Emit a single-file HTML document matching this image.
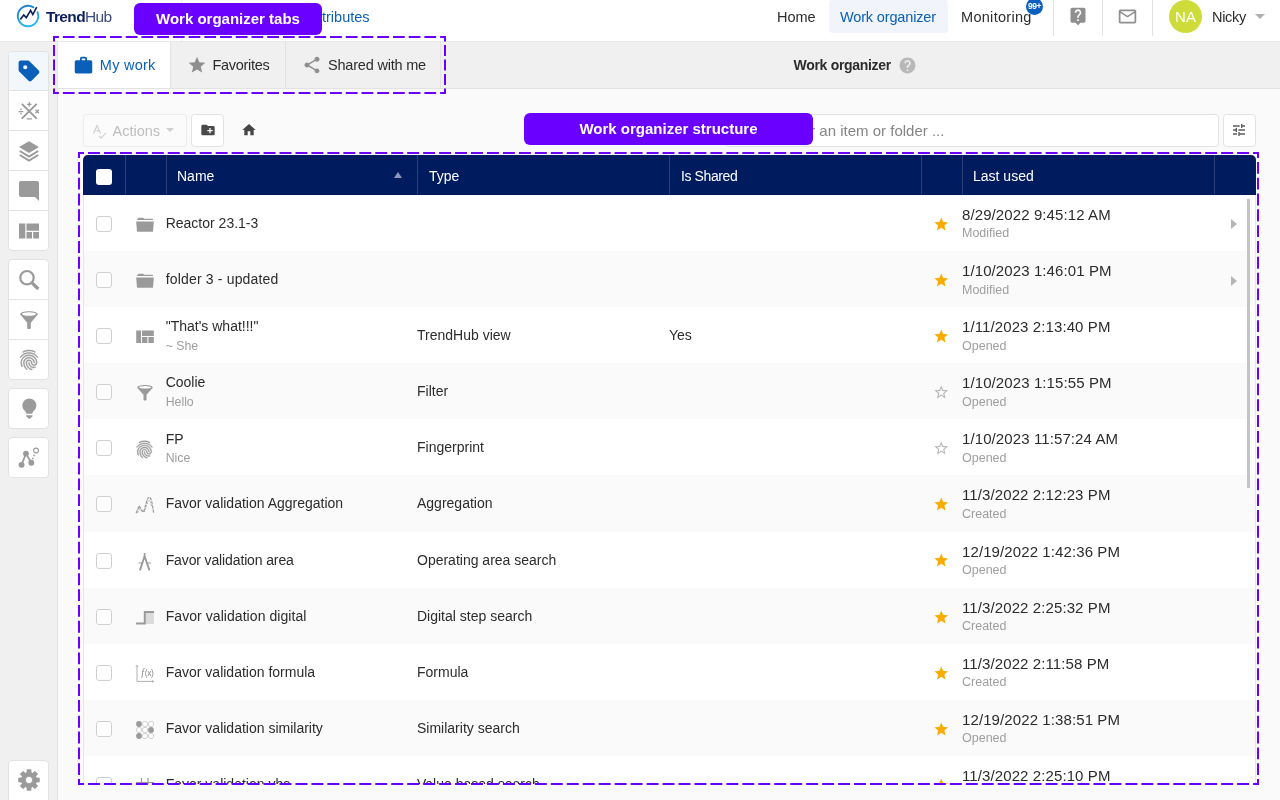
<!DOCTYPE html>
<html lang="en">
<head>
<meta charset="utf-8">
<title>TrendHub - Work organizer</title>
<style>
*{box-sizing:border-box;margin:0;padding:0}
html,body{width:1280px;height:800px;overflow:hidden}
body{font-family:"Liberation Sans",sans-serif;background:#f0f0f0;color:#2c2c2c;position:relative;font-size:14px}
#app{position:absolute;left:0;top:0;width:1280px;height:800px;overflow:hidden;will-change:transform}
svg{display:block}
.abs{position:absolute}
/* ---------- top bar ---------- */
#top{position:absolute;left:0;top:0;width:1280px;height:42px;background:#fff;border-bottom:1px solid #e8e8e8}
#top .t{position:absolute;white-space:nowrap;line-height:20px}
.logo-txt{left:46px;top:6.700px;font-size:15.500px;color:#0c1e5b;letter-spacing:-0.65px}
.logo-txt b{font-weight:bold}
.logo-txt span{color:#3b4a80}
.vsep{position:absolute;top:0;width:1px;height:36px;background:#e2e2e2}
/* ---------- side bar ---------- */
.grp{position:absolute;left:8px;width:41px;background:#fff;border:1px solid #e2e2e2;border-radius:4px;overflow:hidden}
/* ---------- main ---------- */
#main{position:absolute;left:57px;top:42px;width:1223px;height:758px;background:#fafafa;border-left:1px solid #e2e2e2}
#tabs{position:absolute;left:0;top:0;width:1222px;height:47px;background:#f0f0f0;border-bottom:1px solid #e2e2e2}
.tab{position:absolute;top:0;height:46px;display:flex;align-items:center;font-size:14.5px;color:#2c2c2c;border-right:1px solid #e2e2e2;white-space:nowrap}
.tab.on{background:#fff;color:#0a5fb8}
.tab svg{margin-right:7px}
/* ---------- toolbar ---------- */
.btn{position:absolute;top:114px;height:33px;border:1px solid #e2e2e2;border-radius:3.500px;background:#fff}
/* ---------- table ---------- */
#thead{position:absolute;left:83px;top:155px;width:1172.500px;height:40px;background:#001b5e;border-radius:5px 5px 0 0;color:#fff;font-size:14px}
#thead .c{position:absolute;top:0;height:39px;border-left:1px solid #2b3f77}
#thead .h{position:absolute;top:12px;line-height:18px;white-space:nowrap}
#tbody{position:absolute;left:83px;top:194.900px;width:1172.500px;height:589px;overflow:hidden;border-left:1px solid #e6e6e6;border-right:1px solid #e6e6e6;background:#fff}
.row{position:relative;height:56.120px;width:1171px;background:#fff}
.row:nth-child(even){background:#fafafa}
.row .cb{position:absolute;left:12px;top:21px;width:16px;height:16px;border:1px solid #cfcfcf;border-radius:3px;background:#fff}
.row .ic{position:absolute;left:51px;top:20px;width:20px;height:20px;overflow:visible}
.row .n{position:absolute;left:81.700px;top:19px;font-size:14px;line-height:18px;white-space:nowrap;color:#2c2c2c}
.row .n.two{top:10.200px}
.row .s{position:absolute;left:81.700px;top:30.500px;font-size:12.300px;line-height:16px;color:#9e9e9e;white-space:nowrap}
.row .ty{position:absolute;left:333px;top:19px;font-size:14px;line-height:18px;white-space:nowrap}
.row .sh{position:absolute;left:585px;top:19px;font-size:14px;line-height:18px}
.row .st{position:absolute;left:849.100px;top:20.900px;width:16.500px;height:16.500px}
.row .d{position:absolute;left:878px;top:11px;font-size:15px;line-height:18px;white-space:nowrap;letter-spacing:.1px}
.row .m{position:absolute;left:878px;top:30.500px;font-size:12.500px;line-height:16px;color:#9e9e9e}
.row .ar{position:absolute;left:1147px;top:24.500px;width:0;height:0;border-left:6px solid #b5b5b5;border-top:5px solid transparent;border-bottom:5px solid transparent}
/* ---------- annotations ---------- */
.lab{position:absolute;background:#6a00ff;color:#fff;border-radius:6px;font-weight:bold;font-size:15px;text-align:center;white-space:nowrap}
</style>
</head>
<body>
<div id="app">

<!-- TOPBAR -->
<div id="top">
  <svg class="abs" style="left:15px;top:3.400px" width="26" height="26" viewBox="0 0 26 26">
    <defs><linearGradient id="lg" x1="0" y1="0" x2="0.350" y2="1"><stop offset="0" stop-color="#1878cc"/><stop offset="1" stop-color="#25b8ea"/></linearGradient></defs>
    <path d="M18.400 4.350 A10.200 10.200 0 1 0 22.460 9.180" fill="none" stroke="url(#lg)" stroke-width="1.900" stroke-linecap="round"/>
    <path d="M5.300 16.400 L8.700 12 L11.300 14.600 L15.600 7.400 L17.800 11.600 L21.700 4.200" fill="none" stroke="#0c1e5b" stroke-width="1.600" stroke-linejoin="miter"/>
  </svg>
  <div class="t logo-txt"><b>Trend</b><span>Hub</span></div>
  <div class="t" style="left:308.300px;top:7px;font-size:14.500px;color:#0a5fb8">Attributes</div>
  <div class="t" style="left:777px;top:7px;font-size:14.5px">Home</div>
  <div class="abs" style="left:829px;top:0;width:118.500px;height:32.500px;background:#f1f5fb;border-radius:3px 3px 4px 4px"></div>
  <div class="t" style="left:840px;top:7px;font-size:14.500px;letter-spacing:-.15px;color:#0a5fb8">Work organizer</div>
  <div class="t" style="left:961px;top:7px;font-size:14.500px;letter-spacing:.3px">Monitoring</div>
  <div class="abs" style="left:1026px;top:-2px;width:17px;height:17px;border-radius:9px;background:#0a5fc0;color:#fff;font-size:8.500px;font-weight:bold;line-height:17px;text-align:center;letter-spacing:-0.5px">99+</div>
  <div class="vsep" style="left:181px;height:41px;background:#ececec"></div>
  <div class="vsep" style="left:1053px"></div>
  <div class="vsep" style="left:1102px"></div>
  <div class="vsep" style="left:1152px"></div>
  <svg class="abs" style="left:1068px;top:6px" width="20" height="20" viewBox="0 0 24 24"><path fill="#8f8f8f" d="M19 2H5c-1.11 0-2 .9-2 2v14c0 1.1.89 2 2 2h4l3 3 3-3h4c1.1 0 2-.9 2-2V4c0-1.1-.9-2-2-2zm-6 16h-2v-2h2v2zm2.070-7.750l-.9.92C13.450 11.9 13 12.500 13 14h-2v-.5c0-1.100.45-2.100 1.170-2.830l1.240-1.260c.37-.36.59-.86.59-1.410 0-1.100-.9-2-2-2s-2 .9-2 2H8c0-2.210 1.790-4 4-4s4 1.790 4 4c0 .88-.36 1.680-.93 2.250z"/></svg>
  <svg class="abs" style="left:1117.200px;top:5.800px" width="21" height="21" viewBox="0 0 24 24"><path fill="#8f8f8f" d="M20 4H4c-1.100 0-1.990.9-1.990 2L2 18c0 1.100.9 2 2 2h16c1.100 0 2-.9 2-2V6c0-1.100-.9-2-2-2zm0 14H4V8l8 5 8-5v10zm-8-7L4 6h16l-8 5z"/></svg>
  <div class="abs" style="left:1169px;top:0;width:33px;height:33px;border-radius:17px;background:#cddc39;color:#fff;font-size:15px;line-height:33px;text-align:center">NA</div>
  <div class="t" style="left:1212px;top:7px;font-size:14.500px;letter-spacing:-.3px">Nicky</div>
  <div class="abs" style="left:1254.500px;top:14px;width:0;height:0;border-top:5px solid #b0b0b0;border-left:5px solid transparent;border-right:5px solid transparent"></div>
</div>

<!-- SIDEBAR -->
<div class="grp" style="top:51px;height:200px"><div class="abs" style="left:0;top:0;width:39px;height:38px;background:#f2f7fc"></div><div class="abs" style="left:0;top:38px;width:39px;height:1px;background:#e2e2e2"></div><div class="abs" style="left:0;top:78px;width:39px;height:1px;background:#e2e2e2"></div><div class="abs" style="left:0;top:118px;width:39px;height:1px;background:#e2e2e2"></div><div class="abs" style="left:0;top:158px;width:39px;height:1px;background:#e2e2e2"></div></div>
<div class="grp" style="top:259px;height:121px"><div class="abs" style="left:0;top:39px;width:39px;height:1px;background:#e2e2e2"></div><div class="abs" style="left:0;top:79px;width:39px;height:1px;background:#e2e2e2"></div></div>
<div class="grp" style="top:388px;height:41px"></div>
<div class="grp" style="top:437px;height:41px"></div>
<div class="grp" style="top:760px;height:46px"></div>
<svg class="abs" style="left:16.75px;top:59.25px" width="24" height="24" viewBox="0 0 24 24"><path fill="#0a5fb8" d="M21.41 11.58l-9-9C12.05 2.22 11.55 2 11 2H4c-1.1 0-2 .9-2 2v7c0 .55.22 1.05.59 1.42l9 9c.36.36.86.58 1.41.58.55 0 1.05-.22 1.41-.59l7-7c.37-.36.59-.86.59-1.41 0-.55-.23-1.06-.59-1.42zM8.400 10.400a2 2 0 1 1 0-4 2 2 0 0 1 0 4z" transform="translate(12 12) scale(1.040) translate(-12 -12)"/></svg>
<svg class="abs" style="left:16.5px;top:99px" width="24" height="24" viewBox="0 0 24 24" fill="none" stroke="#9a9a9a"><path d="M4.800 4.800L19.700 19.700M19.700 4.800L4.800 19.700" stroke-width="1.900"/><path d="M10.100 5.300h4.400M12.300 3.100v4.400M9.700 19.900h5.200M1.700 12.500h4.600M18.500 10.800l3.400 3.400M21.900 10.800l-3.400 3.400" stroke-width="1.250"/><circle cx="4" cy="10.400" r=".8" fill="#9a9a9a" stroke="none"/><circle cx="4" cy="14.600" r=".8" fill="#9a9a9a" stroke="none"/></svg>
<svg class="abs" style="left:16.75px;top:138.5px" width="24" height="24" viewBox="0 0 24 24"><path fill="#9a9a9a" d="M12 2.200L2.050 8.100l9.950 5.900 9.950-5.900z"/><path fill="none" stroke="#9a9a9a" stroke-width="2" d="M2.800 12l9.200 5.500 9.200-5.500M2.800 16l9.200 5.500 9.200-5.500"/></svg>
<svg class="abs" style="left:16.75px;top:178.5px" width="24" height="24" viewBox="0 0 24 24"><path fill="#9a9a9a" d="M21.990 4c0-1.100-.89-2-1.990-2H4c-1.100 0-2 .9-2 2v12c0 1.100.9 2 2 2h14l4 4-.01-18z"/></svg>
<svg class="abs" style="left:16.75px;top:219px" width="24" height="24" viewBox="0 0 24 24"><path fill="#9a9a9a" d="M2 4.500h6.300v15H2zM9.500 4.500H22v7.300H9.500zM9.500 13h5.500v6.500H9.500zM16.200 13H22v6.500h-5.800z"/></svg>
<svg class="abs" style="left:16.75px;top:267.5px" width="24" height="24" viewBox="0 0 24 24" fill="none" stroke="#9a9a9a"><circle cx="10" cy="9.700" r="6.700" stroke-width="2.200"/><path d="M15 14.800l6.300 6.200" stroke-width="3.200"/></svg>
<svg class="abs" style="left:16.75px;top:307.5px" width="24" height="24" viewBox="0 0 24 24"><path fill="#9a9a9a" d="M3.300 6.200C3.300 4.400 7.100 3.300 12 3.300s8.700 1.100 8.700 2.900c0 .5-.3 1-.8 1.400L13.800 14.800v5.300c0 .6-.4 1-1 1h-1.600c-.6 0-1-.4-1-1v-5.300L4.100 7.600c-.5-.4-.8-.9-.8-1.400z"/><ellipse cx="12" cy="6" rx="7" ry="1.700" fill="#fff"/></svg>
<svg class="abs" style="left:16.75px;top:347.5px" width="24" height="24" viewBox="0 0 24 24"><path fill="#9a9a9a" stroke="#9a9a9a" stroke-width=".45" d="M17.810 4.470c-.08 0-.16-.02-.23-.06C15.660 3.420 14 3 12.010 3c-1.980 0-3.860.47-5.570 1.410-.24.13-.54.04-.68-.2-.13-.24-.04-.55.2-.68C7.820 2.520 9.860 2 12.010 2c2.130 0 3.990.47 6.030 1.520.25.13.34.43.21.67-.09.18-.26.28-.44.28zM3.500 9.720c-.1 0-.2-.03-.29-.09-.23-.16-.28-.47-.12-.7.990-1.400 2.250-2.500 3.750-3.270C9.980 4.040 14 4.030 17.150 5.650c1.500.77 2.760 1.860 3.750 3.250.16.22.11.54-.12.7-.23.16-.54.11-.7-.12-.9-1.260-2.040-2.250-3.390-2.940-2.870-1.470-6.540-1.470-9.400.01-1.360.7-2.500 1.700-3.400 2.960-.08.14-.23.21-.39.21zm6.250 12.070c-.13 0-.26-.05-.35-.15-.87-.87-1.340-1.430-2.010-2.640-.69-1.230-1.050-2.730-1.050-4.340 0-2.970 2.540-5.390 5.660-5.390s5.660 2.420 5.660 5.390c0 .28-.22.5-.5.5s-.5-.22-.5-.5c0-2.420-2.090-4.390-4.660-4.390-2.570 0-4.660 1.970-4.660 4.390 0 1.440.32 2.770.93 3.850.64 1.150 1.080 1.640 1.850 2.420.19.2.19.51 0 .71-.11.1-.24.15-.37.15zm7.170-1.850c-1.190 0-2.240-.3-3.100-.89-1.490-1.010-2.380-2.650-2.380-4.390 0-.28.22-.5.5-.5s.5.22.5.5c0 1.410.72 2.740 1.940 3.560.71.480 1.540.71 2.540.71.240 0 .64-.03 1.040-.1.270-.05.53.13.58.41.05.27-.13.53-.41.58-.57.11-1.070.12-1.210.12zM14.910 22c-.04 0-.09-.01-.13-.02-1.590-.44-2.630-1.030-3.720-2.100-1.400-1.390-2.170-3.240-2.170-5.220 0-1.620 1.380-2.940 3.080-2.940 1.700 0 3.080 1.320 3.080 2.940 0 1.070.93 1.940 2.080 1.940s2.080-.87 2.080-1.940c0-3.770-3.250-6.830-7.250-6.830-2.840 0-5.440 1.580-6.610 4.030-.39.81-.59 1.760-.59 2.800 0 .78.07 2.010.67 3.610.1.260-.03.55-.29.640-.26.1-.55-.04-.64-.29-.49-1.310-.73-2.610-.73-3.960 0-1.200.23-2.290.68-3.240 1.330-2.790 4.280-4.600 7.510-4.600 4.550 0 8.250 3.510 8.250 7.830 0 1.620-1.380 2.940-3.080 2.940s-3.080-1.320-3.080-2.940c0-1.070-.93-1.940-2.080-1.940s-2.080.87-2.080 1.940c0 1.710.66 3.310 1.870 4.510.95.940 1.860 1.460 3.270 1.850.27.07.42.35.35.61-.05.23-.26.38-.47.38z"/></svg>
<svg class="abs" style="left:16.75px;top:396.5px" width="24" height="24" viewBox="0 0 24 24"><path fill="#9a9a9a" d="M12.350 1.500a7 7 0 0 0-7 7c0 2.400 1.200 4.400 2.900 5.700c.6.500 1 1.300 1 2.100v.5h6.200v-.5c0-.8.400-1.600 1-2.100c1.700-1.300 2.900-3.300 2.900-5.700a7 7 0 0 0-7-7zM9.250 18.200h6.200v1.300l-3.100 2.600-3.100-2.600z"/></svg>
<svg class="abs" style="left:16.75px;top:445.5px" width="24" height="24" viewBox="0 0 24 24" fill="#9a9a9a" stroke="#9a9a9a"><path d="M4.550 18.850L8.950 7.600L14.350 16.800" fill="none" stroke-width="1.700"/><path d="M15.600 13.200L17.600 8" fill="none" stroke-width="1.500" stroke-dasharray="1.600 1.600"/><circle cx="4.550" cy="18.850" r="2.950" stroke="none"/><circle cx="8.950" cy="7.600" r="2.900" stroke="none"/><circle cx="14.350" cy="16.800" r="2.950" stroke="none"/><circle cx="19.050" cy="4.500" r="2.400" fill="#fff" stroke-width="1.100"/></svg>
<svg class="abs" style="left:16.6px;top:768px" width="24" height="24" viewBox="0 0 24 24"><path fill="#9a9a9a" fill-rule="evenodd" stroke="#9a9a9a" stroke-width=".8" stroke-linejoin="round" d="M9.94 4.58L10.09 1.68L13.91 1.68L14.06 4.58L15.79 5.30L17.95 3.35L20.65 6.05L18.70 8.21L19.42 9.94L22.32 10.09L22.32 13.91L19.42 14.06L18.70 15.79L20.65 17.95L17.95 20.65L15.79 18.70L14.06 19.42L13.91 22.32L10.09 22.32L9.94 19.42L8.21 18.70L6.05 20.65L3.35 17.95L5.30 15.79L4.58 14.06L1.68 13.91L1.68 10.09L4.58 9.94L5.30 8.21L3.35 6.05L6.05 3.35L8.21 5.30zM15.60 12a3.6 3.6 0 1 0 -7.2 0a3.6 3.6 0 1 0 7.2 0z"/></svg>

<!-- MAIN -->
<div id="main">
  <div id="tabs">
    <div class="tab on" style="left:0;width:113px;padding-left:15.300px"><svg width="21" height="21" viewBox="0 0 24 24"><path fill="#0a5fb8" d="M20 6h-4V4c0-1.110-.89-2-2-2h-4c-1.110 0-2 .89-2 2v2H4c-1.110 0-1.990.89-1.990 2L2 19c0 1.110.89 2 2 2h16c1.110 0 2-.89 2-2V8c0-1.110-.89-2-2-2zm-6 0h-4V4h4v2z"/></svg><span style="margin-left:-1.500px;letter-spacing:.25px">My work</span></div>
    <div class="tab" style="left:113px;width:115px;padding-left:16px"><svg width="20" height="20" viewBox="0 0 24 24"><path fill="#8f8f8f" d="M12 17.270L18.180 21l-1.640-7.030L22 9.240l-7.190-.61L12 2 9.190 8.630 2 9.240l5.460 4.730L5.820 21z"/></svg><span style="letter-spacing:-.3px;margin-left:-1.500px">Favorites</span></div>
    <div class="tab" style="left:228px;width:155px;padding-left:16px"><svg width="20" height="20" viewBox="0 0 24 24"><path fill="#8f8f8f" d="M18 16.080c-.76 0-1.440.3-1.960.77L8.910 12.700c.05-.23.09-.46.09-.7s-.04-.47-.09-.7l7.050-4.110c.54.5 1.250.81 2.040.81 1.660 0 3-1.340 3-3s-1.340-3-3-3-3 1.340-3 3c0 .24.04.47.09.7L8.040 9.810C7.500 9.310 6.790 9 6 9c-1.660 0-3 1.340-3 3s1.340 3 3 3c.79 0 1.500-.31 2.040-.81l7.120 4.160c-.05.21-.08.43-.08.65 0 1.610 1.310 2.920 2.920 2.920 1.610 0 2.920-1.310 2.920-2.920s-1.310-2.920-2.920-2.920z"/></svg><span style="letter-spacing:-.2px;margin-left:-1px">Shared with me</span></div>
    <div class="abs" style="left:735.500px;top:13.200px;font-size:14px;letter-spacing:-.3px;font-weight:bold;line-height:20px;white-space:nowrap;color:#2c2c2c">Work organizer</div>
    <svg class="abs" style="left:840px;top:13.700px" width="19" height="19" viewBox="0 0 24 24"><path fill="#b8b8b8" d="M12 2C6.480 2 2 6.480 2 12s4.480 10 10 10 10-4.480 10-10S17.520 2 12 2zm1 17h-2v-2h2v2zm2.070-7.750l-.9.920C13.450 12.900 13 13.500 13 15h-2v-.5c0-1.100.45-2.100 1.170-2.830l1.240-1.260c.37-.36.59-.86.59-1.410 0-1.100-.9-2-2-2s-2 .9-2 2H8c0-2.210 1.790-4 4-4s4 1.790 4 4c0 .88-.36 1.680-.93 2.250z"/></svg>
  </div>
</div>

<!-- TOOLBAR -->
<div class="btn" style="left:83px;width:104px;background:#fbfbfb;border-color:#ececec"></div>
<svg class="abs" style="left:91.500px;top:122.800px" width="17" height="17" viewBox="0 0 17 17" fill="none" stroke="#cfcfcf" stroke-width="1.100"><path d="M1.500 10.500L5 2.500L8.500 10.500M2.800 7.800h4.400"/><path d="M7 13l2.200 2.200L13.800 10"/></svg>
<div class="abs" style="left:112.500px;top:120.500px;font-size:14.500px;line-height:20px;color:#bdbdbd">Actions</div>
<div class="abs" style="left:166px;top:128px;width:0;height:0;border-top:4.500px solid #cfcfcf;border-left:4px solid transparent;border-right:4px solid transparent"></div>
<div class="btn" style="left:191px;width:33px"></div>
<svg class="abs" style="left:199.700px;top:122.100px" width="16" height="16" viewBox="0 0 24 24"><path fill="#4a4a4a" d="M20 6h-8l-2-2H4c-1.110 0-1.990.89-1.990 2L2 18c0 1.110.89 2 2 2h16c1.110 0 2-.89 2-2V8c0-1.110-.89-2-2-2zm-1 8h-3v3h-2v-3h-3v-2h3V9h2v3h3v2z"/></svg>
<svg class="abs" style="left:240.700px;top:122.300px" width="16" height="16" viewBox="0 0 24 24"><path fill="#454545" d="M10 20v-6h4v6h5v-8h3L12 3 2 12h3v8z"/></svg>
<div class="btn" style="left:725px;width:493.500px"></div>
<div class="abs" style="left:746px;top:121px;font-size:15px;line-height:20px;color:#858585;white-space:nowrap">Search for an item or folder ...</div>
<div class="btn" style="left:1223px;width:33px"></div>
<svg class="abs" style="left:1231.200px;top:122.300px" width="16" height="16" viewBox="0 0 24 24"><path fill="#5c5c5c" d="M3 17v2h6v-2H3zM3 5v2h10V5H3zm10 16v-2h8v-2h-8v-2h-2v6h2zM7 9v2H3v2h4v2h2V9H7zm14 4v-2H11v2h10zm-6-4h2V7h4V5h-4V3h-2v6z"/></svg>

<!-- TABLE -->
<div id="thead">
  <div class="abs" style="left:13.300px;top:14.300px;width:16px;height:16px;background:#fff;border-radius:3px"></div>
  <div class="c" style="left:42px"></div>
  <div class="c" style="left:83px"></div>
  <div class="c" style="left:334px"></div>
  <div class="c" style="left:586px"></div>
  <div class="c" style="left:838px"></div>
  <div class="c" style="left:879px"></div>
  <div class="c" style="left:1131px"></div>
  <div class="h" style="left:94px">Name</div>
  <div class="abs" style="left:311px;top:17px;width:0;height:0;border-bottom:6px solid #8d99bb;border-left:4px solid transparent;border-right:4px solid transparent"></div>
  <div class="h" style="left:346px">Type</div>
  <div class="h" style="left:598px;letter-spacing:-.4px">Is Shared</div>
  <div class="h" style="left:890px">Last used</div>
</div>
<div id="tbody">
  <div class="row"><div class="cb"></div><svg class="ic" viewBox="0 0 20 20"><path fill="#9a9a9a" d="M2.100 5V4.200c0-.2.200-.4.400-.4H3l.3-.8c.1-.2.200-.3.400-.3h4.400c.2 0 .3.100.4.300l.4.800h8.600c.2 0 .4.200.4.400V5zM1.200 7c0-.3.100-.4.400-.4h16.800c.3 0 .4.100.4.400l-.8 9.400c0 .2-.2.400-.4.400H2.400c-.2 0-.4-.2-.4-.4z"/></svg><div class="n">Reactor 23.1-3</div><svg class="st" viewBox="0 0 24 24"><path fill="#f9ab00" d="M12 17.270L18.180 21l-1.640-7.030L22 9.240l-7.190-.61L12 2 9.190 8.630 2 9.240l5.460 4.730L5.820 21z"/></svg><div class="d">8/29/2022 9:45:12 AM</div><div class="m">Modified</div><div class="ar"></div></div>
  <div class="row"><div class="cb"></div><svg class="ic" viewBox="0 0 20 20"><path fill="#9a9a9a" d="M2.100 5V4.200c0-.2.200-.4.400-.4H3l.3-.8c.1-.2.200-.3.400-.3h4.400c.2 0 .3.100.4.300l.4.800h8.600c.2 0 .4.200.4.400V5zM1.200 7c0-.3.100-.4.400-.4h16.800c.3 0 .4.100.4.400l-.8 9.400c0 .2-.2.400-.4.400H2.400c-.2 0-.4-.2-.4-.4z"/></svg><div class="n" style="letter-spacing:.17px">folder 3 - updated</div><svg class="st" viewBox="0 0 24 24"><path fill="#f9ab00" d="M12 17.270L18.180 21l-1.640-7.030L22 9.240l-7.190-.61L12 2 9.190 8.630 2 9.240l5.460 4.730L5.820 21z"/></svg><div class="d">1/10/2023 1:46:01 PM</div><div class="m">Modified</div><div class="ar"></div></div>
  <div class="row"><div class="cb"></div><svg class="ic" viewBox="0 0 20 20"><path fill="#9a9a9a" d="M1.200 3.500h4.800V16H1.200zM7 3.500h11.800v5.500H7zM7 10h5.400v6H7zM13.400 10h5.400v6h-5.400z"/></svg><div class="n two">&quot;That's what!!!&quot;</div><div class="s">~ She</div><div class="ty">TrendHub view</div><div class="sh">Yes</div><svg class="st" viewBox="0 0 24 24"><path fill="#f9ab00" d="M12 17.270L18.180 21l-1.640-7.030L22 9.240l-7.190-.61L12 2 9.190 8.630 2 9.240l5.460 4.730L5.820 21z"/></svg><div class="d">1/11/2023 2:13:40 PM</div><div class="m">Opened</div></div>
  <div class="row"><div class="cb"></div><svg class="ic" viewBox="0 0 20 20"><path fill="#9a9a9a" d="M2.300 4.500C2.300 3 5.700 2 10 2s7.700 1 7.700 2.500c0 .4-.2.800-.6 1.100L11.500 11.800v4.900c0 .5-.4.800-.8.800H9.300c-.4 0-.8-.3-.8-.8v-4.900L2.900 5.600c-.4-.3-.6-.7-.6-1.100z"/><ellipse cx="10" cy="4.300" rx="6.200" ry="1.300" fill="#fff"/></svg><div class="n two">Coolie</div><div class="s">Hello</div><div class="ty">Filter</div><svg class="st" viewBox="0 0 24 24"><path fill="#b5b5b5" d="M22 9.240l-7.190-.62L12 2 9.190 8.630 2 9.240l5.460 4.730L5.820 21 12 17.270 18.180 21l-1.630-7.030L22 9.240zM12 15.400l-3.760 2.270 1-4.280-3.320-2.880 4.380-.38L12 6.100l1.710 4.040 4.380.38-3.320 2.880 1 4.280L12 15.400z"/></svg><div class="d">1/10/2023 1:15:55 PM</div><div class="m">Opened</div></div>
  <div class="row"><div class="cb"></div><svg class="ic" style="left:49.500px;top:19.200px;width:21px;height:21px" viewBox="0 0 24 24"><path fill="#9a9a9a" stroke="#9a9a9a" stroke-width=".5" d="M17.810 4.470c-.08 0-.16-.02-.23-.06C15.660 3.420 14 3 12.010 3c-1.980 0-3.860.47-5.570 1.410-.24.13-.54.04-.68-.2-.13-.24-.04-.55.2-.68C7.820 2.520 9.860 2 12.010 2c2.130 0 3.990.47 6.030 1.520.25.13.34.43.21.67-.09.18-.26.28-.44.28zM3.500 9.720c-.1 0-.2-.03-.29-.09-.23-.16-.28-.47-.12-.7.990-1.400 2.250-2.500 3.750-3.270C9.980 4.040 14 4.030 17.150 5.650c1.500.77 2.760 1.860 3.750 3.250.16.22.11.54-.12.7-.23.16-.54.11-.7-.12-.9-1.260-2.040-2.250-3.390-2.940-2.870-1.470-6.540-1.470-9.400.01-1.360.7-2.500 1.700-3.400 2.960-.08.14-.23.21-.39.21zm6.250 12.070c-.13 0-.26-.05-.35-.15-.87-.87-1.340-1.430-2.010-2.640-.69-1.230-1.050-2.730-1.050-4.340 0-2.970 2.540-5.390 5.660-5.390s5.660 2.420 5.660 5.390c0 .28-.22.5-.5.5s-.5-.22-.5-.5c0-2.420-2.090-4.390-4.660-4.390-2.570 0-4.660 1.970-4.660 4.390 0 1.440.32 2.770.93 3.850.64 1.150 1.080 1.640 1.850 2.420.19.2.19.51 0 .71-.11.1-.24.15-.37.15zm7.170-1.850c-1.190 0-2.240-.3-3.100-.89-1.490-1.010-2.380-2.650-2.380-4.390 0-.28.22-.5.5-.5s.5.22.5.5c0 1.410.72 2.740 1.940 3.560.71.480 1.540.71 2.540.71.240 0 .64-.03 1.040-.1.270-.05.53.13.58.41.05.27-.13.53-.41.58-.57.11-1.070.12-1.210.12zM14.910 22c-.04 0-.09-.01-.13-.02-1.590-.44-2.630-1.030-3.720-2.100-1.400-1.390-2.170-3.240-2.170-5.220 0-1.620 1.380-2.940 3.080-2.940 1.700 0 3.080 1.320 3.080 2.940 0 1.070.93 1.940 2.080 1.940s2.080-.87 2.080-1.940c0-3.770-3.250-6.830-7.250-6.830-2.840 0-5.440 1.580-6.610 4.030-.39.81-.59 1.760-.59 2.800 0 .78.07 2.010.67 3.610.1.260-.03.55-.29.640-.26.1-.55-.04-.64-.29-.49-1.310-.73-2.610-.73-3.960 0-1.200.23-2.290.68-3.240 1.330-2.790 4.280-4.600 7.510-4.600 4.550 0 8.250 3.510 8.250 7.830 0 1.620-1.380 2.940-3.080 2.940s-3.080-1.320-3.080-2.940c0-1.070-.93-1.940-2.080-1.940s-2.080.87-2.080 1.940c0 1.710.66 3.310 1.870 4.510.95.940 1.860 1.460 3.270 1.850.27.07.42.35.35.61-.05.23-.26.38-.47.38z"/></svg><div class="n two">FP</div><div class="s">Nice</div><div class="ty">Fingerprint</div><svg class="st" viewBox="0 0 24 24"><path fill="#b5b5b5" d="M22 9.240l-7.190-.62L12 2 9.190 8.630 2 9.240l5.460 4.730L5.820 21 12 17.270 18.180 21l-1.630-7.030L22 9.240zM12 15.400l-3.760 2.270 1-4.280-3.320-2.880 4.380-.38L12 6.100l1.710 4.040 4.380.38-3.320 2.880 1 4.280L12 15.400z"/></svg><div class="d">1/10/2023 11:57:24 AM</div><div class="m">Opened</div></div>
  <div class="row"><div class="cb"></div><svg class="ic" viewBox="0 0 20 20" fill="none" stroke="#9a9a9a"><path d="M1.100 18.200L4.200 10.700L6.100 15L8.600 17L11.700 6.400Q14.200 -1.800 16.700 6.400L18.600 17.600" stroke-width="1.200" stroke-dasharray="3.200 .9"/><path d="M2.600 17.800L5 12.500L7 16L9.600 16.500L12.400 8Q14.200 3 15.800 8L16.800 12" stroke-width=".9" stroke-dasharray="1.600 1.300"/></svg><div class="n">Favor validation Aggregation</div><div class="ty">Aggregation</div><svg class="st" viewBox="0 0 24 24"><path fill="#f9ab00" d="M12 17.270L18.180 21l-1.640-7.030L22 9.240l-7.190-.61L12 2 9.190 8.630 2 9.240l5.460 4.730L5.820 21z"/></svg><div class="d">11/3/2022 2:12:23 PM</div><div class="m">Created</div></div>
  <div class="row"><div class="cb"></div><svg class="ic" viewBox="0 0 20 20" fill="none" stroke="#9a9a9a"><path d="M9.600 4.300L4.900 18.400M9.600 4.300L14.500 18.400" stroke-width="1.900"/><path d="M3.600 11H16.100" stroke-width="1"/><path d="M9.600 1V5" stroke-width="1.700"/><path d="M9.600 7.500L8 12.500h3.200z" fill="#fff" stroke="none"/></svg><div class="n" style="letter-spacing:-.13px">Favor validation area</div><div class="ty">Operating area search</div><svg class="st" viewBox="0 0 24 24"><path fill="#f9ab00" d="M12 17.270L18.180 21l-1.640-7.030L22 9.240l-7.190-.61L12 2 9.190 8.630 2 9.240l5.460 4.730L5.820 21z"/></svg><div class="d">12/19/2022 1:42:36 PM</div><div class="m">Opened</div></div>
  <div class="row"><div class="cb"></div><svg class="ic" viewBox="0 0 20 20"><path fill="#dcdcdc" d="M10.500 4H19v12h-8.500z"/><path fill="none" stroke="#9a9a9a" stroke-width="2" d="M1 15.600h8.800V4H19"/></svg><div class="n" style="letter-spacing:.06px">Favor validation digital</div><div class="ty">Digital step search</div><svg class="st" viewBox="0 0 24 24"><path fill="#f9ab00" d="M12 17.270L18.180 21l-1.640-7.030L22 9.240l-7.190-.61L12 2 9.190 8.630 2 9.240l5.460 4.730L5.820 21z"/></svg><div class="d">11/3/2022 2:25:32 PM</div><div class="m">Created</div></div>
  <div class="row"><div class="cb"></div><svg class="ic" viewBox="0 0 20 20"><path fill="none" stroke="#a8a8a8" stroke-width=".9" d="M2 1.500v15.900h16.500M.9 2.800L2 1.300l1.100 1.500M17.300 16.300l1.400 1.100-1.400 1.100"/><text x="6.300" y="11.800" font-family="Liberation Serif,serif" font-style="italic" font-size="10" fill="#8a8a8a">f</text><text x="9.800" y="11.500" font-family="Liberation Sans,sans-serif" font-size="8.500" fill="#8a8a8a" letter-spacing="-.4">(x)</text></svg><div class="n">Favor validation formula</div><div class="ty">Formula</div><svg class="st" viewBox="0 0 24 24"><path fill="#f9ab00" d="M12 17.270L18.180 21l-1.640-7.030L22 9.240l-7.190-.61L12 2 9.190 8.630 2 9.240l5.460 4.730L5.820 21z"/></svg><div class="d">11/3/2022 2:11:58 PM</div><div class="m">Created</div></div>
  <div class="row"><div class="cb"></div><svg class="ic" viewBox="0 0 20 20" fill="#fff" stroke="#c8c8c8" stroke-width=".8"><circle cx="10" cy="4" r="2.700"/><circle cx="16" cy="4" r="2.700"/><circle cx="4" cy="10" r="2.700"/><circle cx="10" cy="10" r="2.700"/><circle cx="10" cy="16" r="2.700"/><circle cx="16" cy="16" r="2.700"/><circle cx="4" cy="4" r="2.900" fill="#9a9a9a" stroke="none"/><circle cx="16" cy="10" r="2.900" fill="#9a9a9a" stroke="none"/><circle cx="4" cy="16" r="2.900" fill="#9a9a9a" stroke="none"/></svg><div class="n">Favor validation similarity</div><div class="ty">Similarity search</div><svg class="st" viewBox="0 0 24 24"><path fill="#f9ab00" d="M12 17.270L18.180 21l-1.640-7.030L22 9.240l-7.190-.61L12 2 9.190 8.630 2 9.240l5.460 4.730L5.820 21z"/></svg><div class="d">12/19/2022 1:38:51 PM</div><div class="m">Opened</div></div>
  <div class="row"><div class="cb"></div><svg class="ic" viewBox="0 0 20 20" fill="none" stroke="#9a9a9a" stroke-width="1.200"><path d="M1 6.500h18M6.500 2v16M13 2v16"/></svg><div class="n">Favor validation vbs</div><div class="ty">Value based search</div><svg class="st" viewBox="0 0 24 24"><path fill="#f9ab00" d="M12 17.270L18.180 21l-1.640-7.030L22 9.240l-7.190-.61L12 2 9.190 8.630 2 9.240l5.460 4.730L5.820 21z"/></svg><div class="d">11/3/2022 2:25:10 PM</div><div class="m">Created</div></div>
  <div class="abs" style="left:1163.300px;top:4px;width:3.200px;height:289px;background:#c4c4c4"></div>
</div>

<!-- ANNOTATIONS -->
<svg class="abs" style="left:53px;top:36px" width="393" height="58" fill="none" stroke="#6a00ff" stroke-width="2"><path d="M0 1H393" stroke-dasharray="11.790 3.930" stroke-dashoffset="5.895"/><path d="M0 57H393" stroke-dasharray="11.790 3.930" stroke-dashoffset="5.895"/><path d="M1 0V58" stroke-dasharray="10.875 3.625" stroke-dashoffset="5.438"/><path d="M392 0V58" stroke-dasharray="10.875 3.625" stroke-dashoffset="5.438"/></svg>
<svg class="abs" style="left:78px;top:152px" width="1181" height="633" fill="none" stroke="#6a00ff" stroke-width="2"><path d="M0 1H1181" stroke-dasharray="11.970 3.990" stroke-dashoffset="5.985"/><path d="M0 632H1181" stroke-dasharray="11.970 3.990" stroke-dashoffset="5.985"/><path d="M1 0V633" stroke-dasharray="11.869 3.956" stroke-dashoffset="5.934"/><path d="M1180 0V633" stroke-dasharray="11.869 3.956" stroke-dashoffset="5.934"/></svg>
<div class="lab" style="left:134px;top:3px;width:188px;height:32px;line-height:32px">Work organizer tabs</div>
<div class="lab" style="left:524px;top:113px;width:289px;height:32px;line-height:32px">Work organizer structure</div>

</div>
</body>
</html>
